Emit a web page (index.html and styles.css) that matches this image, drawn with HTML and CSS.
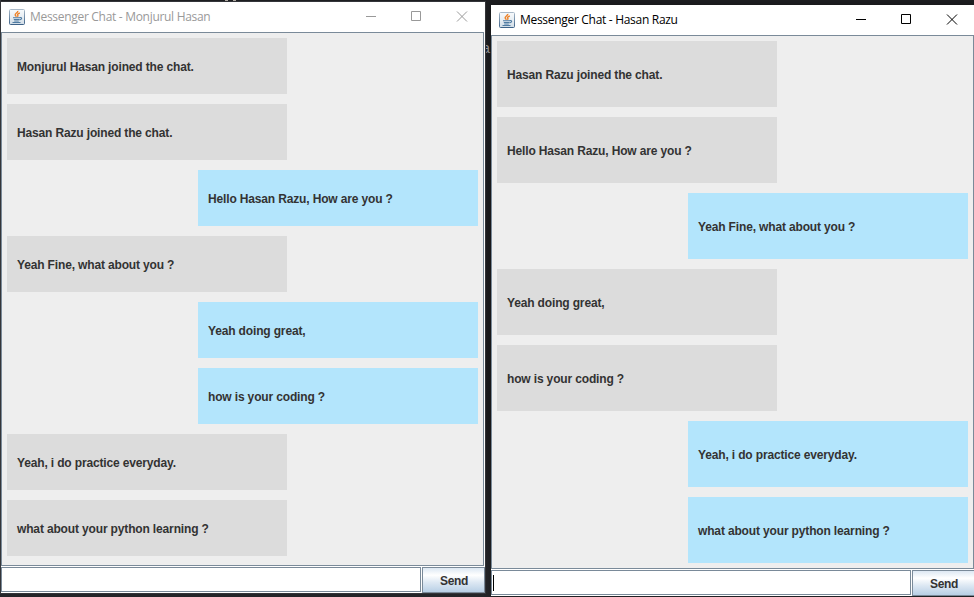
FILE: index.html
```
<!DOCTYPE html>
<html lang="en">
<head>
<meta charset="utf-8">
<title>Messenger Chat</title>
<link rel="stylesheet" href="styles.css">
</head>
<body>
<svg width="0" height="0" class="defs">
  <defs>
    <linearGradient id="tile" x1="0" y1="0" x2="0" y2="1"><stop offset="0" stop-color="#f7fafc"/><stop offset=".5" stop-color="#e8eef3"/><stop offset="1" stop-color="#d0dce6"/></linearGradient>
    <linearGradient id="edge" x1="0" y1="0" x2="0" y2="1"><stop offset="0" stop-color="#a9b9c8"/><stop offset="1" stop-color="#3d6288"/></linearGradient>
    <symbol id="java" viewBox="0 0 16 16">
      <rect x=".5" y=".5" width="15" height="15" rx="1" fill="url(#tile)" stroke="url(#edge)"/>
      <path d="M8.8 1.8C9.2 3.8 5.6 4.2 6.2 6c.2.6.8 1 1.2 1.8M10.8 4C8.4 4.8 8.2 5.6 8.8 6.2c.3.5.1 1-.4 1.5" fill="none" stroke="#ed8127" stroke-width="1.4"/>
      <path d="M4 8.8h6.8M4.8 10.5h5.4M5.2 12h4.6M3.5 13.5h8M10.8 8.6c2.6-.6 2.4 2-.4 2.3" fill="none" stroke="#4f7ba2" stroke-width="1.1"/>
    </symbol>
  </defs>
</svg>
<div class="desktop">
  <div class="code-bits"><i></i><i></i><i></i><i></i><i></i><i></i><i></i></div>
  <div class="code-top"></div>
  <span class="code-letter">a</span>

  <section class="window left">
    <header class="titlebar">
      <svg class="app-icon"><use href="#java"/></svg>
      <h1>Messenger Chat - Monjurul Hasan</h1>
      <svg class="controls" viewBox="0 0 102 11"><path d="M0 5.5h10M45.5.5h9v9h-9z"/><path class="close" d="M91 .5l10 10M101 .5l-10 10"/></svg>
    </header>
    <main class="messages">
      <p>Monjurul Hasan joined the chat.</p>
      <p>Hasan Razu joined the chat.</p>
      <p class="mine">Hello Hasan Razu, How are you ?</p>
      <p>Yeah Fine, what about you ?</p>
      <p class="mine">Yeah doing great,</p>
      <p class="mine">how is your coding ?</p>
      <p>Yeah, i do practice everyday.</p>
      <p>what about your python learning ?</p>
    </main>
    <footer class="composer"><div class="field"></div><button>Send</button></footer>
  </section>

  <section class="window right">
    <header class="titlebar">
      <svg class="app-icon"><use href="#java"/></svg>
      <h1>Messenger Chat - Hasan Razu</h1>
      <svg class="controls" viewBox="0 0 102 11"><path d="M0 5.5h10M45.5.5h9v9h-9z"/><path class="close" d="M91 .5l10 10M101 .5l-10 10"/></svg>
    </header>
    <main class="messages">
      <p>Hasan Razu joined the chat.</p>
      <p>Hello Hasan Razu, How are you ?</p>
      <p class="mine">Yeah Fine, what about you ?</p>
      <p>Yeah doing great,</p>
      <p>how is your coding ?</p>
      <p class="mine">Yeah, i do practice everyday.</p>
      <p class="mine">what about your python learning ?</p>
    </main>
    <footer class="composer"><div class="field"><span class="caret"></span></div><button>Send</button></footer>
  </section>
</div>
</body>
</html>
```
FILE: styles.css
```
* { box-sizing: border-box; }
body { margin: 0; }
.defs { position: absolute; }
.desktop {
  position: relative;
  width: 974px;
  height: 597px;
  overflow: hidden;
  background: linear-gradient(#1d1e21, #1b1a1c 70%, #242529);
}
.code-bits {
  position: absolute;
  left: 0;
  top: 0;
  width: 1px;
  height: 590px;
  background: #3b3d43;
}
.code-bits i { position: absolute; left: 0; width: 1px; height: 9px; background: #755a45; }
.code-bits i:nth-child(1) { top: 45px; }
.code-bits i:nth-child(2) { top: 132px; }
.code-bits i:nth-child(3) { top: 222px; }
.code-bits i:nth-child(4) { top: 244px; }
.code-bits i:nth-child(5) { top: 274px; height: 3px; background: #34589a; }
.code-bits i:nth-child(6) { top: 354px; height: 1px; background: #999; }
.code-bits i:nth-child(7) { top: 374px; height: 10px; background: #45786b; }
.code-top {
  position: absolute;
  left: 225px;
  top: 0;
  width: 11px;
  height: 1px;
  background: repeating-linear-gradient(90deg, #b0aaa2 0 3px, #1d1e21 3px 8px);
}
.code-letter {
  position: absolute;
  left: 482px;
  top: 41px;
  color: #98989b;
  font: 14px/16px "Liberation Mono", monospace;
}

.window {
  position: absolute;
  display: flex;
  flex-direction: column;
  width: 484px;
  background: #fff;
}
.left { left: 1px; top: 2px; height: 591px; box-shadow: 0 0 0 1px #343539; }
.right { left: 491px; top: 5px; height: 591px; box-shadow: 0 0 7px rgba(0, 0, 0, .3); }

.titlebar {
  display: flex;
  align-items: center;
  height: 30px;
  flex: none;
  padding: 0 17px 1px 8px;
}
.app-icon { width: 16px; height: 16px; flex: none; }
h1 {
  flex: 1;
  margin: 0 0 0 5px;
  color: #999;
  font: 12px/16px "Open Sans", "Noto Sans", sans-serif;
  letter-spacing: -.3px;
  white-space: nowrap;
}
.right h1 { color: #000; }
.controls { width: 102px; height: 11px; flex: none; fill: none; stroke: #999; }
.right .controls { stroke: #000; }

.messages {
  flex: 1;
  display: flex;
  flex-direction: column;
  gap: 10px;
  margin-right: 1px;
  padding: 5px;
  border: 1px solid #7a8a99;
  background: #eee;
}
.messages p {
  width: 280px;
  height: 56px;
  flex: none;
  margin: 0;
  padding: 1px 10px 0;
  background: #dcdcdc;
  color: #333;
  font: bold 12px/56px "Liberation Sans", Arial, sans-serif;
  letter-spacing: -.15px;
  white-space: nowrap;
}
.right p { height: 66px; line-height: 66px; }
.messages .mine { align-self: flex-end; background: #b3e5fc; }

.composer { display: flex; flex: none; height: 27px; padding-top: 1px; }
.field {
  width: 420px;
  height: 25px;
  padding: 4px 1px;
  border: 1px solid #7a8a99;
  background: #fff;
}
.caret { display: block; width: 1px; height: 16px; background: #000; }
.composer button {
  width: 63px;
  height: 26px;
  margin-left: 1px;
  padding: 2px 0 0 1px;
  border: 1px solid #7a8a99;
  border-radius: 0;
  background: linear-gradient(#dde8f3, #fff 30%, #dde8f3 60%, #b8cfe5);
  color: #333;
  font: bold 12px/16px "Liberation Sans", Arial, sans-serif;
  letter-spacing: -.3px;
}
```
